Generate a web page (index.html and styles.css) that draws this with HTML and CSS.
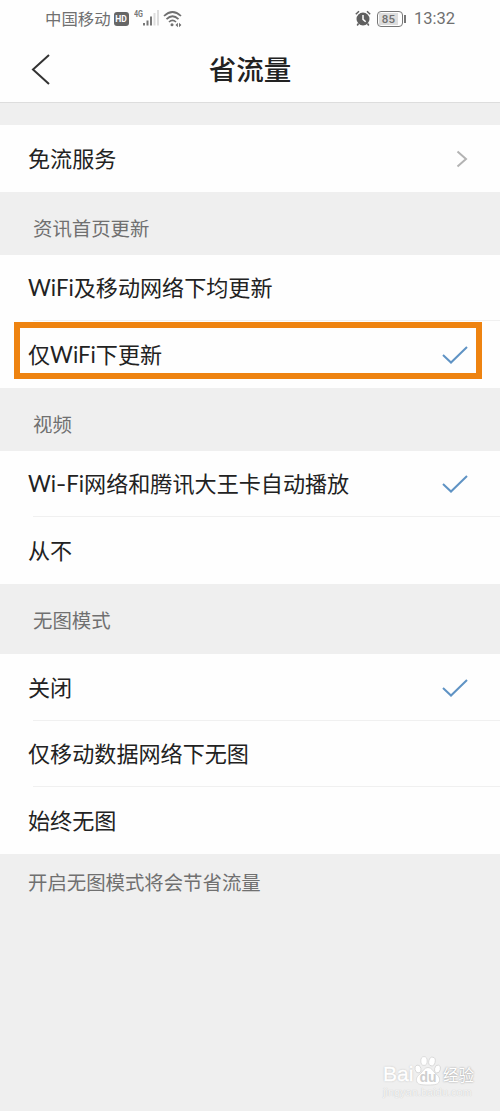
FILE: index.html
```html
<!DOCTYPE html>
<html lang="zh-CN">
<head>
    <meta charset="UTF-8">
    <meta name="viewport" content="width=device-width, initial-scale=1.0">
    <title>省流量</title>
    <link rel="stylesheet" href="styles.css">
</head>
<body>
    <div class="status-bar">
        <span class="carrier">中国移动</span>
        <span class="hd">HD</span>
        <svg class="signal" width="28" height="20" viewBox="0 0 28 20">
            <text x="0" y="7.500" class="net-type" textLength="9" lengthAdjust="spacingAndGlyphs">4G</text>
            <path d="M10 14v2.500M13.500 11.500v5M17 7.500v9" stroke="#777" stroke-width="2"/>
            <path d="M20.500 4v12.500M24 1v15.500" stroke="#ddd" stroke-width="2"/>
        </svg>
        <svg class="wifi" width="20" height="18" viewBox="0 0 20 18">
            <g fill="none" stroke="#707070" stroke-width="1.7">
                <path d="M1 6Q9.500-2 18 6"/>
                <path d="M3.500 9.200Q9.500 3.300 15.500 9.200"/>
                <path d="M6 12Q9.500 8.600 13 12"/>
            </g>
            <circle cx="9" cy="14.800" r="1.500" fill="#707070"/>
            <path d="M14.900 12.700v4.600l-2.400-2.300zM16 12.700v4.600l2.400-2.300z" fill="#707070"/>
        </svg>
        <div class="status-right">
            <svg width="16" height="17" viewBox="0 0 16 17">
                <circle cx="8" cy="9" r="6.500" fill="#606060"/>
                <path d="M.8 4.300L4 1.300M12 1.300l3.200 3M3.500 13.500l-1.300 2M12.500 13.500l1.300 2" stroke="#606060" stroke-width="1.500" fill="none"/>
                <path d="M8 5v4.300l2.700 2.500" stroke="#fff" stroke-width="1.500" fill="none"/>
            </svg>
            <span class="battery"><span>85</span></span>
            <span class="time">13:32</span>
        </div>
    </div>
    <div class="header">
        <svg class="back" width="20" height="32" viewBox="0 0 20 32">
            <path d="M18 1L2 15.500 18 30" fill="none" stroke="#333" stroke-width="2"/>
        </svg>
        <h1>省流量</h1>
    </div>

    <div class="gap"></div>
    <div class="list">
        <div class="row">
            <span>免流服务</span>
            <svg class="arrow" width="12" height="18" viewBox="0 0 12 18">
                <path d="M1.500 1.500L10 9l-8.500 7.500" fill="none" stroke="#b3b3b3" stroke-width="2"/>
            </svg>
        </div>
    </div>

    <div class="section-title">资讯首页更新</div>
    <div class="list">
        <div class="row"><span>WiFi及移动网络下均更新</span></div>
        <div class="row marked">
            <span>仅WiFi下更新</span>
            <svg class="check" width="26" height="18" viewBox="0 0 26 18"><path d="M1 9l8 7.500L25 1"/></svg>
        </div>
    </div>

    <div class="section-title">视频</div>
    <div class="list">
        <div class="row">
            <span>Wi<i class="dash">-</i>Fi网络和腾讯大王卡自动播放</span>
            <svg class="check" width="26" height="18" viewBox="0 0 26 18"><path d="M1 9l8 7.500L25 1"/></svg>
        </div>
        <div class="row"><span>从不</span></div>
    </div>

    <div class="section-title tall">无图模式</div>
    <div class="list">
        <div class="row">
            <span>关闭</span>
            <svg class="check" width="26" height="18" viewBox="0 0 26 18"><path d="M1 9l8 7.500L25 1"/></svg>
        </div>
        <div class="row"><span>仅移动数据网络下无图</span></div>
        <div class="row"><span>始终无图</span></div>
    </div>
    <p class="tip">开启无图模式将会节省流量</p>

    <div class="watermark">
        <div class="logo">
            <span class="bai">Bai</span>
            <svg width="28" height="30" viewBox="0 0 28 30">
                <g fill="#fff" stroke="#d4d4d4" stroke-width=".8">
                    <ellipse cx="4" cy="13" rx="3" ry="4" transform="rotate(-15 4 13)"/>
                    <ellipse cx="10" cy="5" rx="3.200" ry="4.400"/>
                    <ellipse cx="18" cy="5.500" rx="3.200" ry="4.400" transform="rotate(12 18 5.500)"/>
                    <ellipse cx="23.500" cy="13" rx="2.900" ry="4" transform="rotate(15 23.500 13)"/>
                    <path d="M14 11.500c-3.500 0-4.500 3-7 5.500-2.500 2.300-5 4-4.500 7.500.5 4 4 4.500 11.500 4.500s11-.5 11.500-4.500c.5-3.500-2-5.200-4.500-7.500-2.500-2.500-3.500-5.500-7-5.500z"/>
                </g>
                <text x="14" y="26" text-anchor="middle" class="du">du</text>
            </svg>
            <span class="jingyan">经验</span>
        </div>
        <div class="site">jingyan.baidu.com</div>
    </div>
</body>
</html>
```
FILE: styles.css
```css
*, *::before, *::after {
    box-sizing: border-box;
}
body {
    margin: 0;
    height: 1111px;
    overflow: hidden;
    position: relative;
    background: #efefef;
    color: #222;
    font-family: Lato, "Noto Sans CJK SC", sans-serif;
}
.status-bar {
    display: flex;
    align-items: center;
    height: 37px;
    padding: 0 45px;
    background: #fefefe;
    color: #707070;
}
.carrier {
    font-size: 16.4px;
    line-height: 37px;
}
.hd {
    width: 15px;
    height: 14px;
    margin-left: 3px;
    border-radius: 3px;
    background: #666;
    color: #fff;
    font: bold 8.5px/14px Roboto, sans-serif;
    text-align: center;
}
.signal {
    margin: 1px 0 0 5px;
}
.net-type {
    font: bold 8.5px Roboto, sans-serif;
    fill: #777;
}
.wifi {
    margin-left: 1px;
}
.status-right {
    display: flex;
    align-items: center;
    margin-left: auto;
}
.battery {
    position: relative;
    width: 26px;
    height: 16px;
    margin: 0 11px 0 6px;
    padding: 1px;
    border: 1.5px solid #777;
    border-radius: 4px;
    font: 500 11.5px/12px Roboto, sans-serif;
    text-align: center;
}
.battery span {
    display: block;
    width: 19px;
    background: #ddd;
}
.battery::after {
    content: "";
    position: absolute;
    right: -4px;
    top: 3px;
    width: 2px;
    height: 8px;
    background: #777;
}
.time {
    font: 16.5px/37px Roboto, sans-serif;
}
.header {
    display: flex;
    align-items: center;
    height: 66px;
    padding: 0 31px;
    background: #fefefe;
    border-bottom: 1px solid #ddd;
}
.back {
    flex: none;
}
.header h1 {
    flex: 1;
    margin: 0 20px 0 0;
    font-size: 27.5px;
    font-weight: 500;
    line-height: 66px;
    text-align: center;
}
.gap {
    height: 22px;
}
.list {
    background: #fefefe;
}
.row {
    display: flex;
    align-items: center;
    justify-content: space-between;
    position: relative;
    height: 66.5px;
    padding: 1px 32px 0 28px;
    font-size: 22.1px;
    line-height: 32px;
}
.row + .row::before {
    content: "";
    position: absolute;
    top: -1px;
    left: 33px;
    right: 0;
    height: 1px;
    background: #f0f0f0;
}
.dash {
    display: inline-block;
    font-style: normal;
    transform: scaleX(1.3);
    margin: 0 1px;
}
.check path {
    fill: none;
    stroke: #5f93c4;
    stroke-width: 2;
}
/* orange frame around the chosen option */
.marked::after {
    content: "";
    position: absolute;
    left: 14px;
    top: 1px;
    width: 468px;
    height: 57px;
    border: 6px solid #ee8310;
}
.section-title {
    height: 63px;
    padding: 9px 33px 0;
    color: #707070;
    font-size: 19.4px;
    line-height: 56px;
}
.section-title.tall {
    height: 70.5px;
}
.tip {
    margin: 0;
    padding: 1px 28px 0;
    color: #707070;
    font-size: 19.4px;
    line-height: 56px;
}
.watermark {
    position: absolute;
    left: 383px;
    top: 1056px;
    color: #fff;
}
.logo {
    display: flex;
    align-items: flex-end;
    height: 30px;
}
.bai {
    width: 31px;
    font: 21px/24px "Liberation Sans", sans-serif;
    -webkit-text-stroke: .4px #fff;
    text-shadow: 0 0 2px #aaa;
}
.du {
    font: bold 14px "Liberation Sans", sans-serif;
    fill: #cfcfcf;
}
.jingyan {
    margin-left: 1px;
    font-size: 15.5px;
    line-height: 22px;
    text-shadow: 0 0 2px #888;
}
.site {
    font: 11px/12px "Liberation Sans", sans-serif;
    color: #f6f6f6;
    text-shadow: 0 0 1px #bbb;
}
```
